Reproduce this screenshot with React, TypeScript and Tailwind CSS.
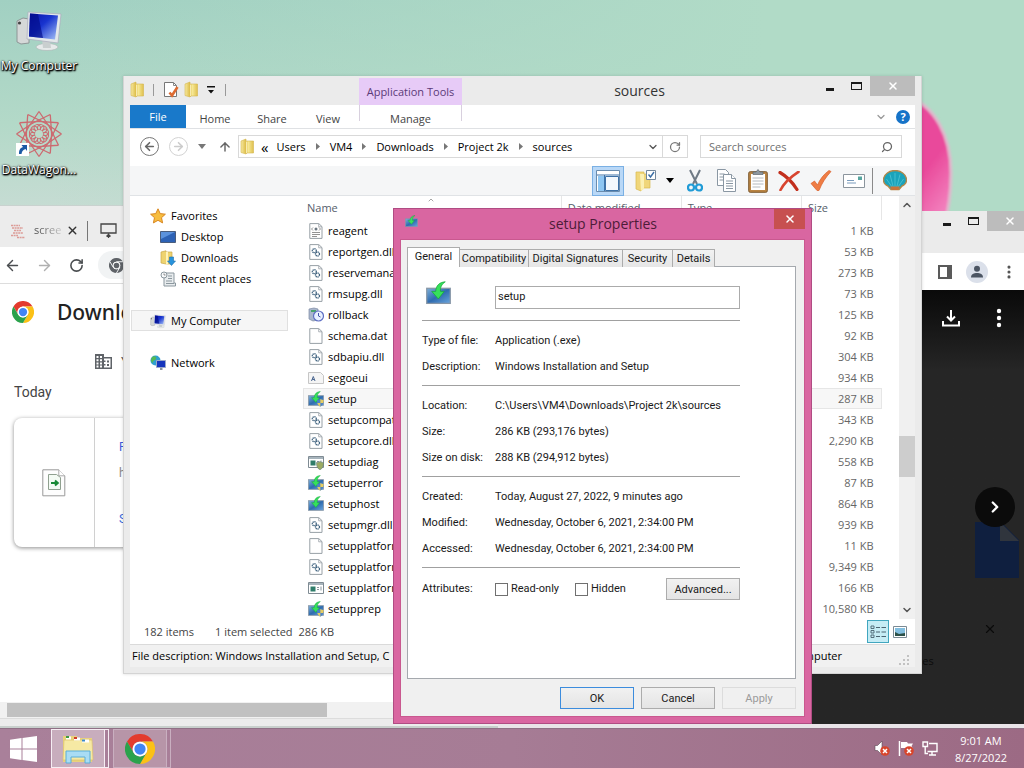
import type { ReactNode } from "react";
import { ArrowLeft, ArrowRight, ArrowUp, ChevronDown, ChevronRight, ChevronUp, RotateCw, Search, X } from "lucide-react";

const UI = "font-['Open_Sans','Noto_Sans',sans-serif]";

/* ---------- icons ---------- */

function FolderIcon() {
  return (
    <svg width="15" height="17" viewBox="0 0 15 17" className="shrink-0">
      <defs>
        <linearGradient id="fold" x1="0" x2="1">
          <stop offset="0" stopColor="#f7e9a0" />
          <stop offset=".45" stopColor="#d9b63c" />
          <stop offset=".55" stopColor="#f9ec9d" />
          <stop offset="1" stopColor="#dfc04e" />
        </linearGradient>
      </defs>
      <path d="M1 3 6 1v2h7.500v12H7l-1 1-5-1.500z" fill="url(#fold)" stroke="#d4b64d" strokeWidth=".6" />
      <path d="M6.500 3.500v11.500" stroke="#fff8cf" strokeWidth=".8" />
    </svg>
  );
}

function PropertiesIcon() {
  return (
    <svg width="16" height="17" viewBox="0 0 16 17" className="shrink-0">
      <path d="M1.500 1.500h9l3 3v11h-12z" fill="#fff" stroke="#777" />
      <path d="M10.500 1.500v3h3" fill="none" stroke="#888" />
      <path d="m6.500 11.500 2.500 3 5.500-8.500" fill="none" stroke="#dd6b31" strokeWidth="2.600" />
    </svg>
  );
}

function SetupArrow({ size, shield = false }: { size: number; shield?: boolean }) {
  return (
    <svg width={size} height={size} viewBox="0 0 24 24" className="shrink-0">
      <defs>
        <linearGradient id="scr" x1="0" y1="0" x2="1" y2="1">
          <stop offset="0" stopColor="#7fb0d8" />
          <stop offset=".5" stopColor="#2f6cb0" />
          <stop offset="1" stopColor="#6aa5de" />
        </linearGradient>
      </defs>
      <rect x=".7" y="7" width="22.600" height="14.500" fill="url(#scr)" stroke="#8796a6" strokeWidth="1.200" />
      <path d="M18.500.8C13 1 9.500 4.500 9.300 10H5.500l6.300 7.200L17.500 10h-3.600C13.500 6.300 15 3 18.500.8z" fill="#36e05b" stroke="#16a63c" strokeWidth=".7" />
      {shield && (
        <g>
          <path d="M18.500 12c2 1.300 3.500 1.500 5 1.500 0 5-1.500 8-5 10-3.500-2-5-5-5-10 1.500 0 3-.2 5-1.500z" fill="#4d83c4" />
          <path d="M18.500 12c2 1.300 3.500 1.500 5 1.500 0 2-.2 3-.7 4.500h-4.300zM18.500 18v5.500c-2.500-1.500-3.700-3-4.500-5.500z" fill="#e6cd62" />
        </g>
      )}
    </svg>
  );
}

type FileKind = "xml" | "dll" | "roll" | "blank" | "font" | "setup" | "host" | "diag" | "app";

function FileIcon({ kind }: { kind: FileKind }) {
  if (kind === "setup") return <SetupArrow size={16} shield />;
  if (kind === "host") return <SetupArrow size={16} />;
  if (kind === "roll")
    return (
      <svg width="16" height="16" viewBox="0 0 16 16" className="shrink-0">
        <path d="M1 2 6 1l4 1v11l-5 1-4-2z" fill="#a9b6cc" stroke="#7d8aa3" strokeWidth=".7" />
        <path d="M3 3h5v2H3z" fill="#4aa36c" />
        <circle cx="10.500" cy="9" r="5" fill="#e8f0ff" stroke="#5e6fc4" strokeWidth="1.200" />
        <path d="M10.500 6v3l2 1" stroke="#4555a8" fill="none" />
      </svg>
    );
  if (kind === "font")
    return (
      <svg width="16" height="16" viewBox="0 0 16 16" className="shrink-0">
        <path d="M.5 2.500h12l3 3v8H.5z" fill="#f5f5f5" stroke="#c6c6c6" />
        <path d="m3.500 11 1.800-4.500L7 11M4.200 9.500h2.200" stroke="#49658f" strokeWidth="1" fill="none" />
      </svg>
    );
  if (kind === "diag" || kind === "app")
    return (
      <svg width="16" height="16" viewBox="0 0 16 16" className="shrink-0">
        <path d="M.5 2.500h15v11H.5z" fill="#fff" stroke="#7f8b93" />
        <path d="M1 3h14v2H1z" fill="#a7b4bc" />
        <path d="M2.500 6.500h5v5h-5z" fill="#2f7d6a" />
        <path d="M9 7.500h2M9 9.500h2M13 6.500v4" stroke="#8a969e" />
        {kind === "diag" && <path d="M12 7.500c1 .8 2 1 3.500 1 0 4-1 6-3.500 7.300-2.500-1.300-3.500-3.300-3.500-7.300 1.500 0 2.500-.2 3.500-1z" fill="#9bab62" stroke="#66827a" strokeWidth=".6" />}
      </svg>
    );
  return (
    <svg width="16" height="16" viewBox="0 0 16 16" className="shrink-0">
      <path d="M1.800.6h9l3.200 3v11.800H1.800z" fill="#fff" stroke="#98a0a6" />
      <path d="M10.700.8v3h3.200" fill="none" stroke="#98a0a6" strokeWidth=".8" />
      {kind === "dll" && (
        <g fill="none" stroke="#40637f">
          <circle cx="6.300" cy="6.700" r="2" strokeWidth="1.300" strokeDasharray="1.200 .5" />
          <circle cx="9.500" cy="10" r="2" strokeWidth="1.300" strokeDasharray="1.200 .5" />
        </g>
      )}
      {kind === "xml" && (
        <g stroke="#777" fill="none">
          <path d="m5 4.500-1.500 1.500L5 7.500M11 4.500 12.500 6 11 7.500M4 9.500h8M4 11.500h8M4 13.500h5" strokeWidth=".8" />
          <circle cx="8" cy="6" r="1.500" fill="#6b7780" stroke="none" />
        </g>
      )}
    </svg>
  );
}

function MonitorIcon({ size }: { size: number }) {
  return (
    <svg width={size} height={size} viewBox="0 0 48 48" className="shrink-0">
      <defs>
        <linearGradient id="mon" x1="0" y1="0" x2="1" y2="1">
          <stop offset="0" stopColor="#0a10a8" />
          <stop offset=".45" stopColor="#1834cf" />
          <stop offset="1" stopColor="#a9c4f7" />
        </linearGradient>
      </defs>
      <path d="m2 15 6-3 6 1v24L6 38l-4-2z" fill="#d5d8d8" stroke="#8e9696" />
      <circle cx="4.500" cy="17" r="1.600" fill="#444" />
      <ellipse cx="32" cy="41" rx="11" ry="3.500" fill="#e6eaea" stroke="#aab4b4" strokeWidth=".6" />
      <path d="m27 33 8 1 1 8h-8z" fill="#c9cfcf" />
      <path d="M13 6 46 8l-3 29-31-4z" fill="#e3e8ea" stroke="#aab" strokeWidth=".7" />
      <path d="m15 7.500 28 2-3 24-26-3z" fill="url(#mon)" />
      <path d="m15 7.500 8 .6 5 24-14-1.600z" fill="#000b86" opacity=".65" />
    </svg>
  );
}

function WagonIcon() {
  const rays = Array.from({ length: 12 }, (_, i) => i * 30);
  return (
    <svg width="48" height="48" viewBox="0 0 48 48">
      <g fill="none" stroke="#cc6a70" strokeWidth="1.300">
        {rays.map((a) => (
          <path key={a} d="M24 1.500 12.500 18.500M24 1.500l11.500 17" transform={`rotate(${a} 24 24)`} />
        ))}
        {rays.map((a) => (
          <circle key={a} cx="24" cy="17.500" r="3.200" transform={`rotate(${a + 15} 24 24)`} strokeWidth="1" />
        ))}
      </g>
      <circle cx="24" cy="24" r="4" fill="#bcdccb" />
      <path d="M1 33h13v13H1z" fill="#fff" />
      <path d="M4 44c0-4 1-6 4-7l-1.500-2H12v6l-1.500-2C8 40 7 41 6.500 44z" fill="#1c5aa5" />
    </svg>
  );
}

function ChromeIcon({ size, gray = false }: { size: number; gray?: boolean }) {
  const c = gray ? ["#5f6368", "#5f6368", "#5f6368", "#5f6368"] : ["#e33b2e", "#fbc116", "#2ba24c", "#4285f4"];
  return (
    <svg width={size} height={size} viewBox="0 0 48 48" className="shrink-0">
      <path d="M3.200 12A24 24 0 0 1 44.800 12H24a12 12 0 0 0-10.400 18z" fill={c[0]} />
      <path d="M44.800 12A24 24 0 0 1 24 48l10.400-18A12 12 0 0 0 24 12z" fill={c[1]} />
      <path d="M24 48A24 24 0 0 1 3.200 12l10.400 18a12 12 0 0 0 20.800 0z" fill={c[2]} />
      {gray && <path d="M24 12h21M13.600 30 3.200 12M34.400 30 24 48" stroke="#f1f3f4" strokeWidth="3" />}
      <circle cx="24" cy="24" r="11.800" fill="#fff" />
      <circle cx="24" cy="24" r="9" fill={c[3]} />
    </svg>
  );
}

/* ---------- shared window pieces ---------- */

function CaptionButtons() {
  return (
    <div className="flex h-5 shrink-0 items-stretch">
      <button aria-label="Minimize" className="flex w-[26px] items-end justify-center pb-[5px]">
        <span className="h-[3px] w-2 bg-[#1a1a1a]" />
      </button>
      <button aria-label="Maximize" className="flex w-[27px] items-center justify-center">
        <span className="h-2 w-[11px] border border-t-2 border-[#1a1a1a]" />
      </button>
      <button aria-label="Close" className="flex w-[45px] items-center justify-center bg-[#bcbcbc] text-white">
        <X size={12} strokeWidth={3} />
      </button>
    </div>
  );
}

/* ---------- browser behind, left ---------- */

function DownloadsBrowser() {
  return (
    <section className="absolute top-[205px] bottom-10 left-0 flex w-[498px] flex-col border-t border-[#c9d2cf] bg-[#ececec]">
      <div className="flex h-[41px] shrink-0 items-center pt-2 pl-2.5">
        <svg width="16" height="16" viewBox="0 0 16 16" fill="none" stroke="#dc9c97" strokeWidth="1.400">
          <path d="M1 2.500h9M2 5h11M4 7.500h7M3 10h10M1 12.500h7M7 14.500h8" strokeDasharray="2 .6" />
        </svg>
        <span className={`ml-2 w-7 overflow-hidden bg-gradient-to-r from-[#444] to-[#ccc] bg-clip-text text-[11px] text-transparent ${UI}`}>scree</span>
        <button aria-label="Close tab" className="ml-1 text-[#333]">
          <X size={13} strokeWidth={2.500} />
        </button>
        <span className="mx-2 h-5 w-px bg-[#777]" />
        <svg width="17" height="18" viewBox="0 0 17 18" fill="none" stroke="#444" strokeWidth="1.300" className="ml-1">
          <path d="M1 2h15v9H1zM8.500 13v3M6.500 14.500l2-2 2 2" />
        </svg>
      </div>
      <div className="flex h-[37px] shrink-0 items-center border-b border-[#ddd] bg-white pl-1 text-[#4a4d50]">
        <ArrowLeft size={17} />
        <ArrowRight size={17} className="ml-[15px] text-[#b0b0b0]" />
        <RotateCw size={15} strokeWidth={2.500} className="ml-4" />
        <div className="ml-3.5 flex h-7 flex-1 items-center rounded-l-full bg-[#f1f3f4] pl-[11px]">
          <ChromeIcon size={15} gray />
        </div>
      </div>
      <div className="min-h-0 flex-1 overflow-hidden bg-white">
        <div className="flex items-center pt-3 pl-3">
          <ChromeIcon size={22} />
          <h1 className="ml-[23px] text-[21px] leading-8 font-medium text-[#222] font-['Noto_Sans','Open_Sans',sans-serif]">Downloads</h1>
        </div>
        <div className="mt-[22px] flex h-6 items-center pl-[95px] text-[#555]">
          <svg width="17" height="16" viewBox="0 0 17 16" fill="#5f6368">
            <path fillRule="evenodd" d="M0 0h9v3h8v12H0zM1.500 2v2h2V2zM5 2v2h2V2zM1.500 5.200v2h2v-2zm3.500 0v2h2v-2zM1.500 8.400v2h2v-2zm3.500 0v2h2v-2zM1.500 11.600v2h2v-2zm3.500 0v2h2v-2zM9 4.500v2h1.500v1.500H9v2h1.500v1.500H9v2h6.500v-9zM12 6.500h2v2h-2zm0 3.500h2v2h-2z" />
          </svg>
          <span className="ml-[9px] text-[13px] font-['Roboto',sans-serif]">Your</span>
        </div>
        <h2 className="mt-2 pl-3.5 text-[14px] leading-5 text-[#444] font-['Roboto',sans-serif]">Today</h2>
        <div className="mt-4 ml-3.5 flex h-[129px] rounded-lg bg-white shadow-[0_1px_4px_rgba(0,0,0,0.45)]">
          <div className="flex w-[81px] items-center justify-center border-r border-[#d0d0d0]">
            <svg width="24" height="28" viewBox="0 0 24 28">
              <path d="M.8.800h16l6 6v20H.8z" fill="#fdfdfd" stroke="#999" />
              <path d="M16.800.800v6h6" fill="#fff" stroke="#aaa" />
              <path d="M6.500 5.500h8l4 3v12h-12z" fill="#f4fbf4" stroke="#8fa08f" />
              <path d="M9 14h6M13 11.500l2.800 2.500L13 16.500" stroke="#178a35" strokeWidth="2" fill="none" />
            </svg>
          </div>
          <div className="flex flex-col justify-center gap-2 pl-6 text-[12px] font-['Roboto',sans-serif]">
            <a href="#file" className="text-[#3b5bdb]">File</a>
            <span className="text-[#888]">https</span>
            <a href="#show" className="mt-5 text-[#3b6bdb]">Show</a>
          </div>
        </div>
      </div>
      <div className="shrink-0 bg-[#f1f1f1] py-px pl-[7px]">
        <div className="h-[14px] w-80 bg-[#c1c1c1]" />
      </div>
      <div className="h-[10px] shrink-0 border-t border-b-2 border-t-[#dcdcdc] border-b-[#c8cfcc]" />
    </section>
  );
}

/* ---------- viewer behind, right ---------- */

function Dots({ color, size }: { color: string; size: number }) {
  return (
    <svg width={size} height={size} viewBox="0 0 20 20" fill={color}>
      <circle cx="10" cy="3" r="2.200" />
      <circle cx="10" cy="10" r="2.200" />
      <circle cx="10" cy="17" r="2.200" />
    </svg>
  );
}

function ViewerBrowser() {
  return (
    <section className="absolute top-[211px] right-[-8px] bottom-10 left-[498px] flex flex-col border-b-4 border-[#e9e4e8] bg-[#262626]">
      <div className="flex h-[42px] shrink-0 justify-end bg-[#ebebeb]">
        <CaptionButtons />
      </div>
      <div className="flex h-[37px] shrink-0 items-center justify-end gap-[14px] bg-white pr-4">
        <svg width="14" height="14" viewBox="0 0 14 14">
          <path d="M1 1h12v12H1z" fill="#fff" stroke="#5a5a5a" strokeWidth="2" />
          <path d="M9 0h5v14H9z" fill="#5a5a5a" />
        </svg>
        <svg width="22" height="22" viewBox="0 0 22 22">
          <circle cx="11" cy="11" r="11" fill="#dbe0ea" />
          <circle cx="11" cy="7.800" r="3" fill="#4c5563" />
          <path d="M5 16.500c0-3.500 3-4.500 6-4.500s6 1 6 4.500z" fill="#4c5563" />
        </svg>
        <Dots color="#555" size={14} />
      </div>
      <div className="min-h-0 flex-1 overflow-hidden bg-gradient-to-b from-[#0a0a0a] to-[#262626] to-[80px]">
        <div className="flex h-14 items-center justify-end gap-[29px] pr-[23px]">
          <svg width="18" height="18" viewBox="0 0 18 18" fill="none" stroke="#fff" strokeWidth="2">
            <path d="M9 1v10M5 7.500l4 4 4-4M1 12v4.500h16V12" />
          </svg>
          <Dots color="#fff" size={20} />
        </div>
        <div className="mt-[141px] flex flex-col items-end pr-4">
          <button aria-label="Next" className="relative z-10 mr-[1px] flex size-10 items-center justify-center rounded-full bg-[#0b0b0b] text-white">
            <ChevronRight size={18} strokeWidth={3} />
          </button>
          <svg width="44" height="56" viewBox="0 0 44 56" className="-mt-[5px] mr-[-3px]">
            <path d="M0 0h26l18 18v38H0z" fill="#0f1f3f" />
            <path d="M25 0v19h19z" fill="#30353d" />
          </svg>
          <button aria-label="Dismiss" className="mt-11 mr-[19px] text-[#0a0a0a]">
            <X size={14} />
          </button>
        </div>
        <p className={`mt-[17px] pl-[396px] text-[11px] text-[#0c0c0c] ${UI}`}>sources</p>
      </div>
    </section>
  );
}

/* ---------- explorer ---------- */

const files: { name: string; kind: FileKind; size: string }[] = [
  { name: "reagent", kind: "xml", size: "1 KB" },
  { name: "reportgen.dll", kind: "dll", size: "53 KB" },
  { name: "reservemanager", kind: "dll", size: "273 KB" },
  { name: "rmsupg.dll", kind: "dll", size: "73 KB" },
  { name: "rollback", kind: "roll", size: "125 KB" },
  { name: "schema.dat", kind: "blank", size: "92 KB" },
  { name: "sdbapiu.dll", kind: "dll", size: "304 KB" },
  { name: "segoeui", kind: "font", size: "934 KB" },
  { name: "setup", kind: "setup", size: "287 KB" },
  { name: "setupcompat", kind: "dll", size: "343 KB" },
  { name: "setupcore.dll", kind: "dll", size: "2,290 KB" },
  { name: "setupdiag", kind: "diag", size: "558 KB" },
  { name: "setuperror", kind: "setup", size: "87 KB" },
  { name: "setuphost", kind: "host", size: "864 KB" },
  { name: "setupmgr.dll", kind: "dll", size: "939 KB" },
  { name: "setupplatform", kind: "blank", size: "11 KB" },
  { name: "setupplatform", kind: "dll", size: "9,349 KB" },
  { name: "setupplatform", kind: "app", size: "166 KB" },
  { name: "setupprep", kind: "setup", size: "10,580 KB" },
];

const crumbs = ["Users", "VM4", "Downloads", "Project 2k", "sources"];

function NavItem({ icon, label, child = false, active = false }: { icon: ReactNode; label: string; child?: boolean; active?: boolean }) {
  const pad = child ? "pl-[28px]" : "pl-[18px]";
  const look = active ? "border-[#e0e0e0] bg-[#f6f6f6]" : "border-transparent";
  return (
    <a href="#nav" className={`ml-px flex h-[21px] w-[157px] items-center gap-[5px] border ${pad} ${look}`}>
      <span className="flex size-4 items-center justify-center">{icon}</span>
      {label}
    </a>
  );
}

function Triangle({ className }: { className: string }) {
  return (
    <svg width="8" height="5" viewBox="0 0 8 5" className={className}>
      <path d="M0 0h8L4 5z" fill="currentColor" />
    </svg>
  );
}

function Toolbar() {
  return (
    <div className="mt-[3px] flex h-[30px] items-center justify-end border-b border-[#e0e3e6] bg-[#f5f6f7] pr-2">
      <button aria-label="Navigation pane" className="flex h-[30px] w-8 items-center justify-center border border-[#7ab0e4] bg-[#b9d8f7]">
        <svg width="24" height="22" viewBox="0 0 24 22">
          <path d="M.5.500h23v21H.5z" fill="#fff" stroke="#6a8cae" />
          <path d="M1 5h22M8.500 5v16" stroke="#3e72a8" />
          <path d="M2 6h6v15H2z" fill="#8ec6f2" />
          <path d="M9.500 6.500h13v14h-13z" fill="#f3f8fd" stroke="#3e72a8" />
        </svg>
      </button>
      <button aria-label="Select" className="ml-[10px] flex w-6 justify-center">
        <svg width="22" height="24" viewBox="0 0 22 24">
          <path d="M1 3h8v2h6v14H8l-2 3-5-2z" fill="#f0d67a" stroke="#d9b94f" strokeWidth=".7" />
          <path d="M5 5h4v15l-3 2z" fill="#fbf0b4" />
          <path d="M11.500 1.500h9v9h-9z" fill="#fff" stroke="#73879b" />
          <path d="m13.500 5.500 2 2.500 3.500-5" fill="none" stroke="#3b6ea5" strokeWidth="1.400" />
        </svg>
      </button>
      <button aria-label="More select options" className="ml-2 text-black">
        <Triangle className="" />
      </button>
      <button aria-label="Cut" className="ml-[10px] flex w-[22px] justify-center">
        <svg width="16" height="24" viewBox="0 0 16 24" fill="none">
          <path d="M3 1 10 15M13 1 6 15" stroke="#6f7a85" strokeWidth="2" />
          <circle cx="4" cy="18.500" r="3" stroke="#219bd6" strokeWidth="2.200" />
          <circle cx="12" cy="18.500" r="3" stroke="#219bd6" strokeWidth="2.200" />
        </svg>
      </button>
      <button aria-label="Copy" className="ml-[10px] flex w-5 justify-center">
        <svg width="19" height="23" viewBox="0 0 19 23" fill="#fff" stroke="#8a97a3">
          <path d="M.5.500h8l3 3v13H.5zM2.500 5h5M2.500 8h5M2.500 11h5" />
          <path d="M6.500 5.500h8l4 4v13h-12z" />
          <path d="M14.500 5.500v4h4M9 12h7M9 14.500h7M9 17h7M9 19.500h7" />
        </svg>
      </button>
      <button aria-label="Paste" className="ml-3 flex w-5 justify-center">
        <svg width="20" height="24" viewBox="0 0 20 24">
          <rect x=".7" y="2.700" width="18.600" height="20.600" rx="1.500" fill="#b98443" stroke="#7d5a30" />
          <path d="M3 5h14v16H3z" fill="#fff" />
          <path d="M4.500 9h11M4.500 12h11M4.500 15h11M4.500 18h8" stroke="#b4bac0" />
          <path d="M5 5.500V3h3l2-2.500L12 3h3v2.500z" fill="#8d979f" stroke="#5e676f" strokeWidth=".7" />
        </svg>
      </button>
      <button aria-label="Delete" className="ml-[10px] flex w-[22px] justify-center">
        <svg width="22" height="20" viewBox="0 0 22 20">
          <path d="M2 1.500C8 5 15 12 19 18.500" fill="none" stroke="#c22f1d" strokeWidth="3.200" strokeLinecap="round" />
          <path d="M20.500.8C14 5 6 12 2.500 19" fill="none" stroke="#d8442f" strokeWidth="2.600" strokeLinecap="round" />
        </svg>
      </button>
      <button aria-label="Rename" className="ml-[10px] flex w-[22px] justify-center">
        <svg width="22" height="21" viewBox="0 0 22 21">
          <path d="M1 13.500 4.500 11l3 4C10 9 14 4 19 .5l2 1C15.500 7.500 12 13 9 20.500H7z" fill="#ef7d45" stroke="#d8602c" strokeWidth=".7" />
        </svg>
      </button>
      <button aria-label="Mail" className="ml-[11px] flex w-[22px] justify-center">
        <svg width="22" height="14" viewBox="0 0 22 14">
          <path d="M.5.500h21v13H.5z" fill="#fff" stroke="#8b959d" />
          <path d="M15 2.500h4v3.500h-4z" fill="#57a6a0" />
          <path d="M4 6.500h7M4 9h9" stroke="#7a9cbd" />
        </svg>
      </button>
      <span className="ml-[7px] h-[26px] w-px bg-[#8a8a8a]" />
      <button aria-label="Shell options" className="ml-[10px] flex w-6 justify-center">
        <svg width="24" height="21" viewBox="0 0 24 21">
          <path d="M12 .5C17 .5 23.500 4 23.500 10c0 3-2 5-4.500 6l-3 3.500H8L5 16C2.500 15 .5 13 .5 10 .5 4 7 .5 12 .5z" fill="#1aa3bb" stroke="#b38748" strokeWidth="1.400" />
          <path d="M12 18V3M10.500 18 7 4.500M13.500 18 17 4.500M9 17 3.500 9M15 17l5.500-8" stroke="#4fc4d4" strokeWidth=".8" />
          <path d="M7 16.500h10l-2 3.500H9z" fill="#c9743a" />
        </svg>
      </button>
    </div>
  );
}

function Explorer() {
  const tab = "flex items-center justify-center pt-1";
  return (
    <section className={`absolute top-[76px] left-[123px] w-[799px] border-x border-b border-[#d4d4d4] bg-[#ebebeb] px-1.5 pb-1.5 text-[11px] leading-4 text-black shadow-[0_0_3px_rgba(0,0,0,0.15)] ${UI}`}>
      <header className="flex h-[29px]">
        <div className="flex w-[229px] items-center pb-0.5 text-[#888]">
          <FolderIcon />
          <span className="ml-2 h-3 w-px bg-[#999]" />
          <span className="ml-[9px]"><PropertiesIcon /></span>
          <span className="ml-[5px]"><FolderIcon /></span>
          <svg width="8" height="8" viewBox="0 0 8 8" className="ml-2">
            <path d="M0 0h8v1.500H0zM1 4h6L4 7.500z" fill="#111" />
          </svg>
          <span className="ml-[10px] h-3 w-px bg-[#999]" />
        </div>
        <div className="mt-0.5 flex w-[103px] items-center justify-center bg-[#e7cbf7] text-[#5b3a78]">Application Tools</div>
        <h1 className="flex flex-1 items-center justify-center text-[14px] text-[#333]">sources</h1>
        <CaptionButtons />
      </header>
      <div className="bg-white">
        <nav className="flex h-6 border-b border-[#dfe1e4] text-[#444]">
          <button className="w-14 bg-[#1979ca] text-white">File</button>
          <button className={`w-[58px] ${tab}`}>Home</button>
          <button className={`w-14 ${tab}`}>Share</button>
          <button className={`w-14 ${tab}`}>View</button>
          <div className="ml-[3px] flex w-[103px]">
            <span className="h-4 w-px bg-[#d8d0de]" />
            <button className={`flex-1 ${tab}`}>Manage</button>
            <span className="h-4 w-px bg-[#d8d0de]" />
          </div>
          <div className="flex flex-1 items-center justify-end gap-[9px] pr-[5px]">
            <ChevronDown size={12} strokeWidth={2.500} className="text-[#999]" />
            <button aria-label="Help" className="flex size-[14px] items-center justify-center rounded-full bg-[#1673c8] text-[11px] font-bold text-white">?</button>
          </div>
        </nav>
        <div className="flex h-[34px] items-center pt-px pl-[10px]">
          <button aria-label="Back" className="flex size-[19px] items-center justify-center rounded-full border-[1.5px] border-[#777] text-[#666]">
            <ArrowLeft size={13} strokeWidth={3} />
          </button>
          <button aria-label="Forward" className="ml-[10px] flex size-[19px] items-center justify-center rounded-full border-[1.5px] border-[#d3d3d3] text-[#ccc]">
            <ArrowRight size={13} strokeWidth={3} />
          </button>
          <Triangle className="ml-[10px] text-[#777]" />
          <ArrowUp size={14} strokeWidth={2.500} className="ml-3 text-[#666]" />
          <div className="ml-[6px] flex h-[23px] w-[450px] items-center border border-[#d9d9d9] pl-px">
            <FolderIcon />
            <span className="ml-[6px] text-[15px]">«</span>
            {crumbs.map((c, i) => (
              <span key={c + i} className="flex items-center">
                {i > 0 && (
                  <svg width="4" height="7" viewBox="0 0 4 7" className="ml-2.5">
                    <path d="M0 0v7l4-3.500z" fill="#777" />
                  </svg>
                )}
                <a href="#crumb" className={i > 0 ? "ml-[10px]" : "ml-2"}>{c}</a>
              </span>
            ))}
            <span className="flex-1" />
            <ChevronDown size={12} strokeWidth={2.500} className="text-[#555]" />
            <span className="ml-[3px] flex h-full w-[25px] items-center justify-center border-l border-[#d9d9d9]">
              <RotateCw size={12} strokeWidth={2.500} className="text-[#777]" />
            </span>
          </div>
          <label className="ml-3 flex h-[23px] w-[202px] items-center border border-[#d9d9d9] pr-2 pl-2">
            <input type="text" aria-label="Search" placeholder="Search sources" className="min-w-0 flex-1 outline-none placeholder:text-[#6f6f6f]" />
            <Search size={12} strokeWidth={2.500} className="-scale-x-100 text-[#666]" />
          </label>
        </div>
        <Toolbar />
        <div className="flex">
          <nav className="w-[173px] shrink-0 pt-[9px]">
            <NavItem label="Favorites" icon={
              <svg width="16" height="16" viewBox="0 0 16 16"><path d="m8 .8 2.200 4.800 5.200.6-3.900 3.500 1.100 5.200L8 12.300l-4.600 2.600 1.100-5.200L.6 6.200l5.200-.6z" fill="#f7bd3f" stroke="#d98722" /></svg>
            } />
            <NavItem child label="Desktop" icon={
              <svg width="16" height="12" viewBox="0 0 16 12"><path d="M.5.500h15v11H.5z" fill="#2d62b5" stroke="#4a5d7c" /><path d="M1 1h14L1 8z" fill="#5b92dc" /></svg>
            } />
            <NavItem child label="Downloads" icon={
              <svg width="16" height="16" viewBox="0 0 16 16"><path d="M1 2 6 .8V2h6v12H6l-5-1z" fill="#eed36f" stroke="#c9a94a" strokeWidth=".7" /><path d="M6 2h2v12l-2 1z" fill="#fff3b8" /><path d="M9.500 7h4v4h2L11.500 15.500 7.500 11h2z" fill="#2893dc" stroke="#1d6ead" strokeWidth=".6" /></svg>
            } />
            <NavItem child label="Recent places" icon={
              <svg width="16" height="16" viewBox="0 0 16 16"><path d="M4 2h10v10h1.500v3H4z" fill="#e8ecee" stroke="#8b979e" /><path d="M8 5h4M8 7.500h4M6 10h6M6 12.500h8" stroke="#8b979e" /><circle cx="4" cy="4" r="3" fill="#f7f9fa" stroke="#8b979e" /><path d="M4 2.500V4h1.500" stroke="#777" fill="none" strokeWidth=".8" /></svg>
            } />
            <div className="h-[21px]" />
            <NavItem active label="My Computer" icon={<MonitorIcon size={16} />} />
            <div className="h-[21px]" />
            <NavItem label="Network" icon={
              <svg width="16" height="16" viewBox="0 0 16 16"><circle cx="5.500" cy="5.500" r="5" fill="#2f9fd0" /><path d="M2 2c3-2 5 0 4 2s-3 1-3 3-2 0-2-2z" fill="#55b955" /><path d="M6.500 5.500h9v7h-9z" fill="#1535bd" stroke="#9aa8c8" /><path d="M10 13h2.500v2H10z" fill="#8a94a0" /></svg>
            } />
          </nav>
          <table className="min-w-0 flex-1 table-fixed border-collapse">
            <thead>
              <tr className="h-6 text-left text-[#55606b]">
                <th className="relative w-[258px] pl-1 font-normal">
                  Name
                  <ChevronUp size={8} className="absolute top-0 left-[124px] text-[#777]" />
                </th>
                <th className="w-[120px] border-l border-[#e6e6e6] pl-1.5 font-normal">Date modified</th>
                <th className="w-[120px] border-l border-[#e6e6e6] pl-1.5 font-normal">Type</th>
                <th className="w-20 border-x border-[#e6e6e6] pl-1.5 font-normal">Size</th>
              </tr>
            </thead>
            <tbody>
              {files.map((f, i) => (
                <tr key={i} className={f.name === "setup" ? "h-[21px] bg-[#f7f7f7] outline -outline-offset-1 outline-[#e6e6e6]" : "h-[21px]"}>
                  <td className="p-0 pl-[5px]">
                    <span className="flex items-center gap-1">
                      <FileIcon kind={f.kind} />
                      {f.name}
                    </span>
                  </td>
                  <td />
                  <td />
                  <td className="p-0 pr-2 text-right text-[#666]">{f.size}</td>
                </tr>
              ))}
            </tbody>
          </table>
          <div className="ml-[17px] flex w-4 shrink-0 flex-col items-center bg-[#f0f0f0] text-[#555]">
            <ChevronUp size={12} strokeWidth={3} className="my-[3px]" />
            <span className="mt-[222px] h-[41px] w-full bg-[#cdcdcd]" />
            <span className="flex-1" />
            <ChevronDown size={12} strokeWidth={3} className="my-[3px]" />
          </div>
        </div>
        <div className="flex h-[25px] items-center pr-2 pl-3.5 text-[#444]">
          <span>182 items</span>
          <span className="ml-[21px]">1 item selected</span>
          <span className="ml-1.5">286 KB</span>
          <span className="flex-1" />
          <button aria-label="Details view" className="flex h-[23px] w-[22px] items-center justify-center border border-[#41a6bf] bg-[#c5ecf5]">
            <svg width="16" height="14" viewBox="0 0 16 14" stroke="#4b6472" fill="none">
              <path d="M1 1h3v2.500H1zM1 5.500h3V8H1zM1 10h3v2.500H1z" strokeWidth=".9" />
              <path d="M6 2.500h4M11.500 2.500H16M6 7h4M11.500 7H16M6 11.500h4M11.500 11.500H16" />
            </svg>
          </button>
          <button aria-label="Thumbnail view" className="ml-1">
            <svg width="14" height="12" viewBox="0 0 14 12">
              <path d="M.5.500h13v11H.5z" fill="#fff" stroke="#7b8a94" />
              <path d="M2 2h10v8H2z" fill="#83bfe0" />
              <path d="m2 6 4 2 6-1v3H2z" fill="#2d5148" />
            </svg>
          </button>
        </div>
      </div>
      <footer className="flex h-[23px] items-center border-t border-[#dadada] bg-[#f1f1f1] pl-0.5">
        <span>File description: Windows Installation and Setup, C</span>
        <span className="flex-1" />
        <span className="mr-[57px]">Computer</span>
        <svg width="10" height="10" viewBox="0 0 10 10" fill="#c2c2c2" className="mr-1.5 mb-0.5 self-end">
          <path d="M8 0h2v2H8zM4 4h2v2H4zM8 4h2v2H8zM0 8h2v2H0zM4 8h2v2H4zM8 8h2v2H8z" />
        </svg>
      </footer>
    </section>
  );
}

/* ---------- properties dialog ---------- */

const groups = [
  [
    ["Type of file:", "Application (.exe)"],
    ["Description:", "Windows Installation and Setup"],
  ],
  [
    ["Location:", "C:\\Users\\VM4\\Downloads\\Project 2k\\sources"],
    ["Size:", "286 KB (293,176 bytes)"],
    ["Size on disk:", "288 KB (294,912 bytes)"],
  ],
  [
    ["Created:", "Today, August 27, 2022, 9 minutes ago"],
    ["Modified:", "Wednesday, October 6, 2021, 2:34:00 PM"],
    ["Accessed:", "Wednesday, October 6, 2021, 2:34:00 PM"],
  ],
];

function PropertiesDialog() {
  const tab = "-ml-px h-[18px] border border-b-0 border-[#acacac] bg-gradient-to-b from-[#f2f2f2] to-[#e6e6e6]";
  const box = "size-[13px] appearance-none border border-[#707070] bg-white";
  const btn = "h-[22px] w-[74px] border bg-gradient-to-b from-[#f1f1f1] to-[#e4e4e4] pt-0.5";
  return (
    <section role="dialog" aria-label="setup Properties" className="absolute top-[208px] left-[393px] w-[419px] border border-[#b04c83] bg-[#d966a1] px-[6px] pb-[6px] text-[11px] leading-4 text-[#1a1a1a] font-['Roboto',sans-serif]">
      <header className="flex h-[30px] items-start">
        <span className="mt-1.5 ml-[5px]"><SetupArrow size={13} /></span>
        <h1 className={`flex-1 pl-3.5 text-center text-[14px] leading-[30px] text-[#4d1c38] ${UI}`}>setup Properties</h1>
        <button aria-label="Close" className="flex h-5 w-[31px] items-center justify-center bg-[#c75050] text-white">
          <X size={12} strokeWidth={3} />
        </button>
      </header>
      <div className="border border-[#c9588f] bg-[#f0f0f0] pt-[7px] pr-2 pb-[7px] pl-1.5">
        <div role="tablist" className="relative z-10 -mb-px flex items-end">
          <button role="tab" aria-selected className="h-5 w-[53px] border border-b-0 border-[#acacac] bg-white pb-0.5">General</button>
          <button role="tab" className={`w-[70px] ${tab}`}>Compatibility</button>
          <button role="tab" className={`w-[95px] ${tab}`}>Digital Signatures</button>
          <button role="tab" className={`w-[51px] ${tab}`}>Security</button>
          <button role="tab" className={`w-[43px] ${tab}`}>Details</button>
        </div>
        <div className="border border-[#a5a9ae] bg-white pr-[55px] pb-[78px] pl-3.5">
          <div className="grid grid-cols-[73px_1fr] items-center pt-[19px] pb-[11px]">
            <span className="-mt-2 pl-1"><SetupArrow size={25} /></span>
            <input type="text" aria-label="File name" defaultValue="setup" className="h-[23px] w-full border border-[#ababab] px-0.5 pb-0.5 outline-none" />
          </div>
          {groups.map((rows, g) => (
            <dl key={g} className="border-t border-[#a0a0a0] pt-[7px] pb-[5px]">
              {rows.map(([k, v]) => (
                <div key={k} className="grid h-[26px] grid-cols-[73px_1fr] items-center">
                  <dt>{k}</dt>
                  <dd className="whitespace-nowrap">{v}</dd>
                </div>
              ))}
            </dl>
          ))}
          <div className="flex items-center border-t border-[#a0a0a0] pt-[10px]">
            <span className="w-[73px]">Attributes:</span>
            <label className="flex w-20 items-center gap-[3px]">
              <input type="checkbox" className={box} />
              Read-only
            </label>
            <label className="flex items-center gap-[3px]">
              <input type="checkbox" className={box} />
              Hidden
            </label>
            <span className="flex-1" />
            <button className={`${btn} border-[#acacac]`}>Advanced...</button>
          </div>
        </div>
        <div className="mt-2 flex justify-end gap-[7px]">
          <button className={`${btn} border-[#3c8cdd]`}>OK</button>
          <button className={`${btn} border-[#acacac]`}>Cancel</button>
          <button disabled className="h-[22px] w-[74px] border border-[#dcdcdc] bg-[#f0f0f0] pt-0.5 text-[#9a9a9a]">Apply</button>
        </div>
      </div>
    </section>
  );
}

/* ---------- taskbar ---------- */

function Taskbar() {
  return (
    <footer className={`absolute inset-x-0 bottom-0 flex h-10 items-center border-t border-[#8f7085] bg-gradient-to-r from-[#a9809a] via-[#a67c95] to-[#9c6a84] text-[11px] text-white ${UI}`}>
      <button aria-label="Start" className="ml-2.5">
        <svg width="28" height="26" viewBox="0 0 28 26" fill="#fff">
          <path d="M0 3.800 11.500 2v10.500H0zM12.500 1.900 27 0v12.500H12.500zM0 13.500h11.500V24L0 22.300zM12.500 13.500H27V26l-14.500-1.900z" />
        </svg>
      </button>
      <button aria-label="File Explorer" className="ml-[13px] flex h-full w-[54px] items-center justify-center border border-[#f6edf3] bg-[#c8adbd]">
        <svg width="32" height="30" viewBox="0 0 32 30">
          <path d="M1 2h14l1 2h14v24H1z" fill="#e9d27c" />
          <path d="M2 6h28l1 20H1z" fill="#f6e9a4" stroke="#dcc26a" strokeWidth=".7" />
          <path d="M4 2.500h5v3H4zM12 3.500h6v3h-6zM20 5.500h7v3h-7z" fill="#fff" />
          <path d="M4 2h3v2H4z" fill="#3d9a43" />
          <path d="M12 3h3v2h-3z" fill="#cf3b2d" />
          <path d="M20 5.500h3v2h-3z" fill="#3c8ac9" />
          <path d="M4 17h24v12h-5v-6H9v6H4z" fill="#a9dcf4" stroke="#5aaed8" />
        </svg>
      </button>
      <span className="h-full w-1 border-y border-r border-[#f6edf3]" />
      <button aria-label="Chrome" className="ml-1 flex h-full w-[54px] items-center justify-center border border-[#c9afc0] bg-[#b795a8]">
        <ChromeIcon size={30} />
      </button>
      <span className="h-full w-1 border-y border-r border-[#c9afc0]" />
      <span className="flex-1" />
      <div className="flex items-center gap-2 pb-px">
        <svg width="16" height="16" viewBox="0 0 16 16">
          <path d="M1 5.500h2.500L8 1v14L3.500 10.500H1z" fill="#fff" stroke="#5b4652" strokeWidth=".6" />
          <circle cx="11" cy="11" r="4.800" fill="#d8452c" />
          <path d="m9 9 4 4m0-4-4 4" stroke="#fff" strokeWidth="1.500" />
        </svg>
        <svg width="16" height="16" viewBox="0 0 16 16">
          <path d="M1.500 1v15" stroke="#fff" strokeWidth="1.500" />
          <path d="M3 2h6l1 1.500h5L13.500 6l1.500 3H9L8 8H3z" fill="#fff" />
          <circle cx="11" cy="11" r="4.800" fill="#d8452c" />
          <path d="m9 9 4 4m0-4-4 4" stroke="#fff" strokeWidth="1.500" />
        </svg>
        <svg width="16" height="16" viewBox="0 0 16 16" fill="none" stroke="#fff" strokeWidth="1.400">
          <path d="M7 3.500h8v8H5.500M10 12v2.500M7 15h7M1 2h4.500v4.500H1zM3.200 6.500v7H6" />
        </svg>
      </div>
      <div className="mr-[17px] ml-[17px] text-center leading-[17px]">
        <div>9:01 AM</div>
        <div>8/27/2022</div>
      </div>
    </footer>
  );
}

function DesktopShortcut({ label, icon }: { label: string; icon: ReactNode }) {
  return (
    <a href="#open" className={`flex w-[78px] flex-col items-center text-[12px] leading-4 whitespace-nowrap text-white [text-shadow:0_1px_2px_#000,1px_1px_2px_#000,1px_1px_1px_#000,0_0_2px_#222] ${UI}`}>
      {icon}
      <span className="mt-1">{label}</span>
    </a>
  );
}

export default function App() {
  return (
    <main className="relative h-screen overflow-hidden bg-[linear-gradient(90deg,transparent_5%,#b1dbc7_75%),linear-gradient(180deg,#a1d0c2_0%,#b3d9c8_16%,#c6dcd3_27%)]">
      <svg width="52" height="140" viewBox="0 0 52 140" className="absolute top-[90px] left-[910px]">
        <defs>
          <linearGradient id="petal" x1="0" y1="0" x2=".4" y2="1">
            <stop offset="0" stopColor="#e8479c" />
            <stop offset=".6" stopColor="#e94a9b" />
            <stop offset="1" stopColor="#f27dbb" />
          </linearGradient>
          <filter id="soft" x="-20%" y="-10%" width="140%" height="120%">
            <feGaussianBlur stdDeviation="1" />
          </filter>
        </defs>
        <path d="M0 8c24 8 41 37 41 75 0 22-3 40-8 57H0z" fill="url(#petal)" stroke="#dfb9cd" strokeWidth="3" filter="url(#soft)" />
      </svg>
      <div className="flex flex-col items-start gap-9 pt-[6px]">
        <DesktopShortcut label="My Computer" icon={<MonitorIcon size={48} />} />
        <DesktopShortcut label="DataWagon..." icon={<WagonIcon />} />
      </div>
      <DownloadsBrowser />
      <ViewerBrowser />
      <Explorer />
      <PropertiesDialog />
      <Taskbar />
    </main>
  );
}
